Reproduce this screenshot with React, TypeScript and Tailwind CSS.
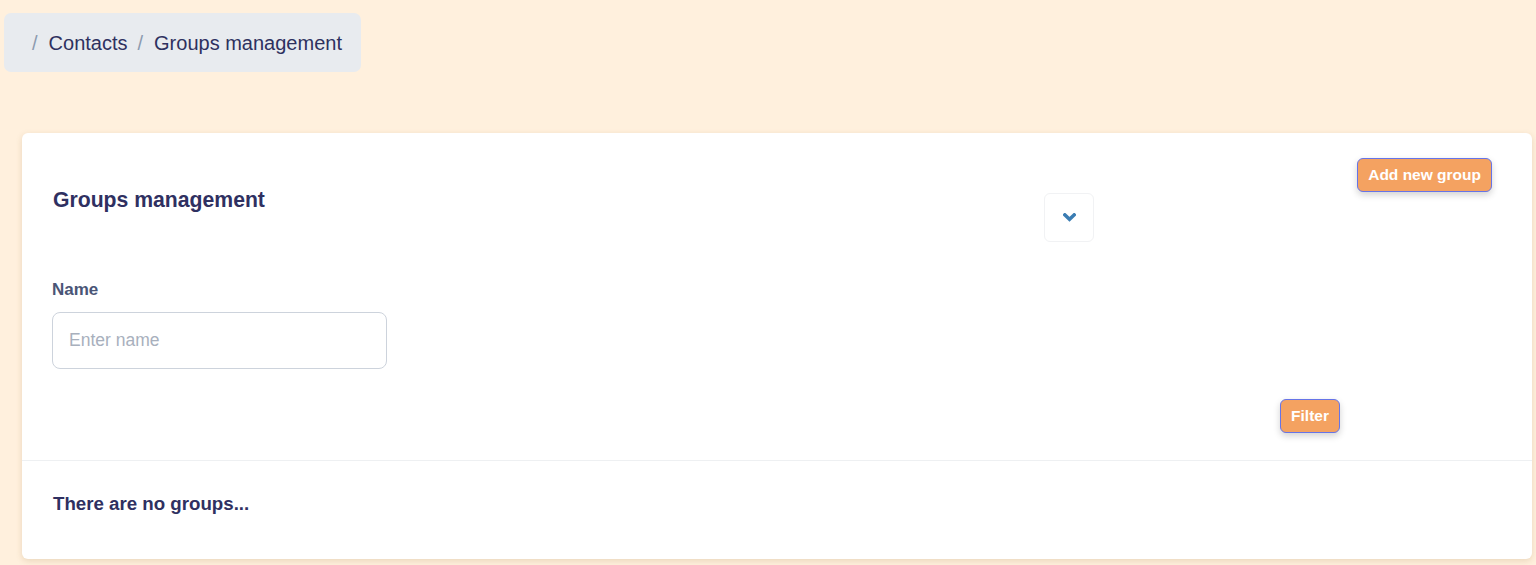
import React from "react";

const font = { fontFamily: '"Liberation Sans", Arial, sans-serif' };

function ChevronDown() {
  return (
    <svg width="13" height="9" viewBox="0 0 13 9" aria-hidden="true">
      <path d="M1.8 1.8 L6.5 6.3 L11.2 1.8" fill="none" stroke="#3b7db3" strokeWidth="3.4" strokeLinecap="square" />
    </svg>
  );
}

function OrangeButton({ children }: { children: React.ReactNode }) {
  return (
    <button
      type="button"
      className="h-[34px] rounded-[6px] border border-[#6674e8] bg-[#f4a261] px-[10px] text-[15.5px] font-bold text-white shadow-[0_3px_7px_rgba(0,0,0,0.18)]"
    >
      {children}
    </button>
  );
}

export default function App() {
  return (
    <div className="min-h-screen bg-[#fff0dd] pb-[7px]" style={font}>
      <div className="pl-[4px] pt-[13px]">
        <nav className="inline-flex h-[59px] items-center rounded-[7px] bg-[#e8ebef] pl-[28px] pr-[19px] text-[20px] text-[#2e3160]">
          <span className="pr-[11px] text-[#8d9bb0]">/</span>
          <span>Contacts</span>
          <span className="pl-[10px] pr-[11px] text-[#8d9bb0]">/</span>
          <span>Groups management</span>
        </nav>
      </div>

      <div className="ml-[22px] mr-[4px] mt-[61px] rounded-[6px] bg-white shadow-[0_2px_6px_rgba(140,100,40,0.18)]">
        <div className="pb-[27px] pt-[25px]">
          <div className="flex items-start pl-[31px] pr-[40px]">
            <h2 className="mt-[29px] w-[991px] text-[21.2px] font-bold leading-[25px] text-[#2f3061]">
              Groups management
            </h2>
            <div className="mt-[35px] flex h-[49px] w-[50px] items-center justify-center rounded-[6px] border border-[#f1f2f4]">
              <ChevronDown />
            </div>
            <div className="flex flex-1 justify-end">
              <OrangeButton>Add new group</OrangeButton>
            </div>
          </div>

          <div className="mt-[38px] pl-[30px]">
            <label className="block text-[17px] font-bold leading-[20px] text-[#4a5576]">Name</label>
            <input
              placeholder="Enter name"
              className="mt-[12px] h-[57px] w-[335px] rounded-[8px] border border-[#cdd3dc] px-[16px] text-[17.5px] text-[#2f3061] outline-none placeholder:text-[#a8b0bd]"
            />
          </div>

          <div className="mt-[30px] flex justify-end pr-[192px]">
            <OrangeButton>Filter</OrangeButton>
          </div>
        </div>

        <div className="border-t border-[#eef0f2] pb-[44px] pl-[31px] pt-[32px]">
          <p className="text-[18.7px] font-bold leading-[22px] text-[#2f3061]">There are no groups...</p>
        </div>
      </div>
    </div>
  );
}
